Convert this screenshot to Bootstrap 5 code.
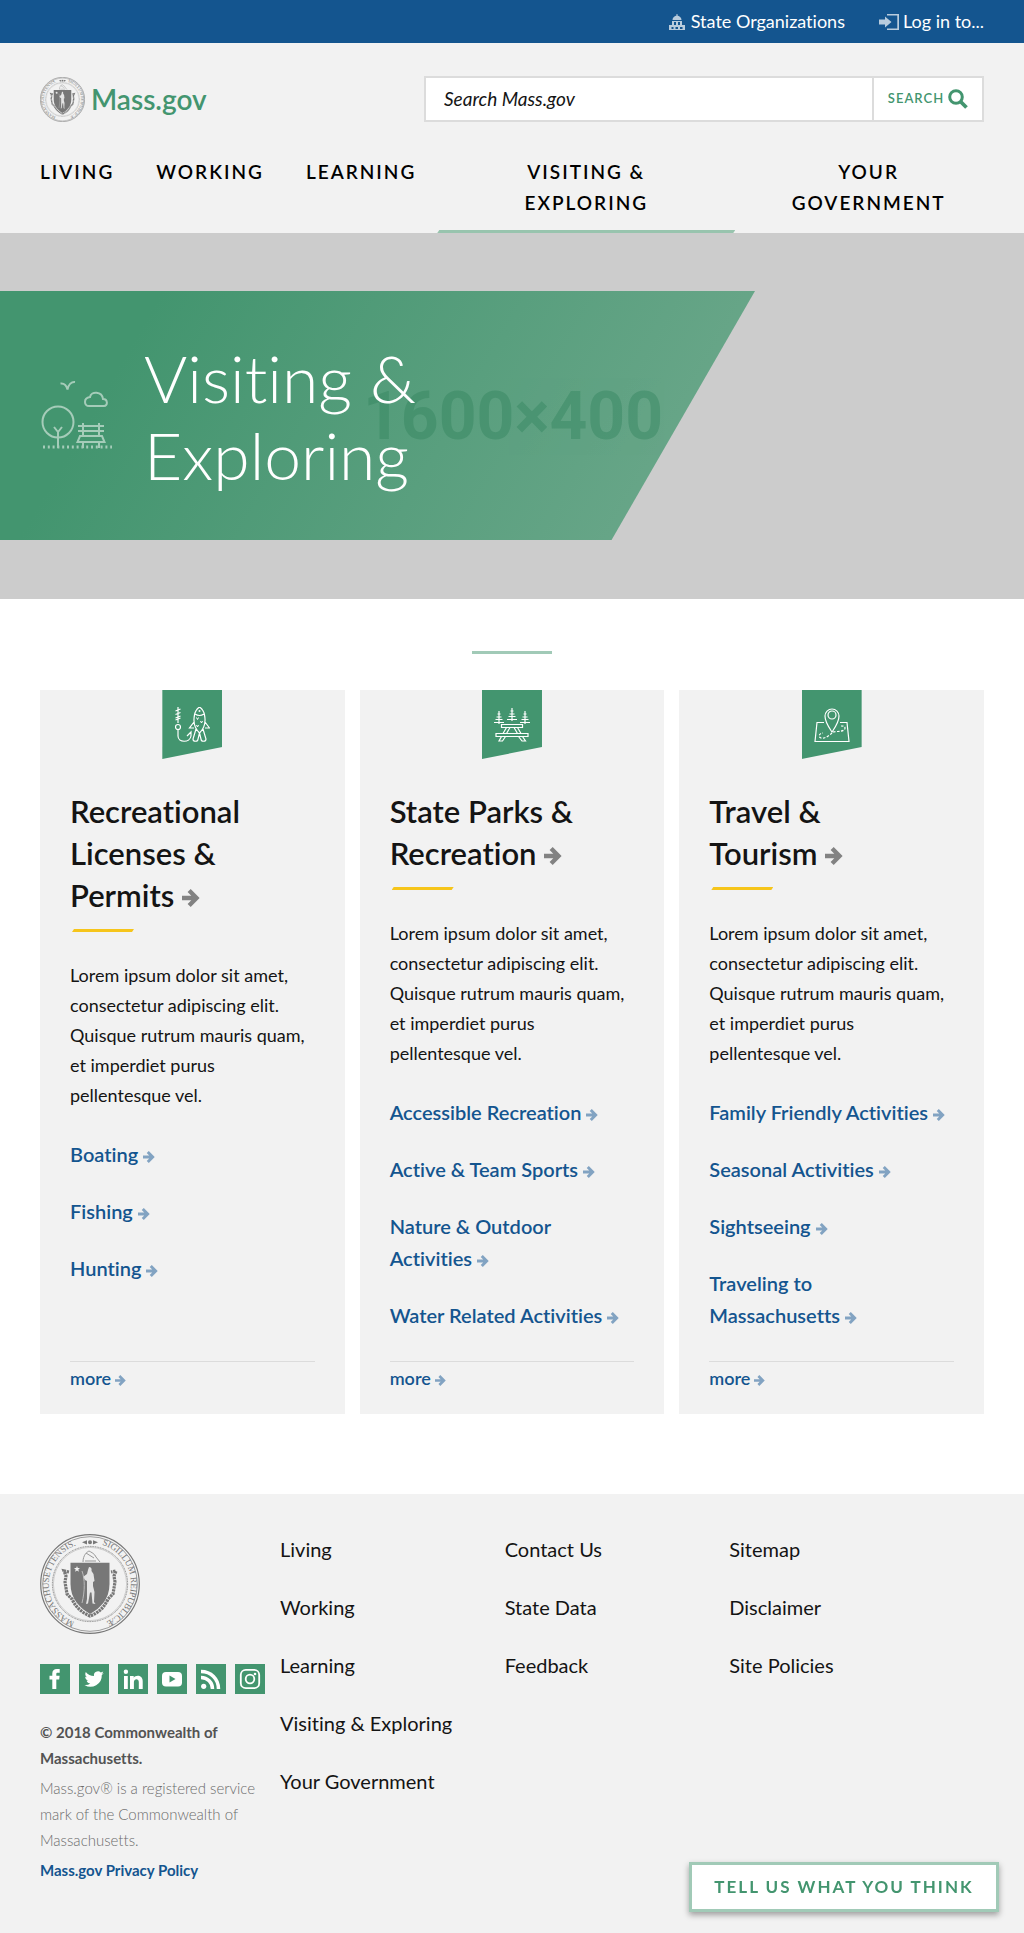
<!DOCTYPE html>
<html lang="en">
<head>
<meta charset="utf-8">
<meta name="viewport" content="width=device-width, initial-scale=1">
<title>Visiting &amp; Exploring | Mass.gov</title>
<link href="https://cdn.jsdelivr.net/npm/bootstrap@5.3.0/dist/css/bootstrap.min.css" rel="stylesheet">
<style>
:root{--green:#43956f;--mint:#a1cab7;--blue:#14558f;--pale:#f2f2f2;--ink:#141414}
body{font-family:Lato,"Open Sans",sans-serif;font-variant-ligatures:none;color:var(--ink);background:#fff}
a{text-decoration:none;color:inherit}
.wrap{padding-left:40px;padding-right:40px}
.utility{background:var(--blue);color:#fff;font-size:18px;line-height:27px;padding-top:8px;padding-bottom:8px;gap:34px}
.utility a{gap:4px}
.utility svg{fill:#fff;opacity:.7}
.masthead{background:var(--pale)}
.brandrow{padding-top:33px;padding-bottom:33px}
.brand{gap:6px}
.sitename{font-size:28px;line-height:36px;font-weight:600;color:var(--green)}
.searchbox{width:560px;height:46px;border:2px solid #dcdcdc;background:#fff}
.searchbox input{font-size:19px;font-style:italic;font-weight:400;padding:0 18px;border:0;min-width:0;color:var(--ink)}
.searchbox input::placeholder{color:var(--ink);opacity:1}
.searchbox button{width:110px;border:0;border-left:2px solid #dcdcdc;background:#fff;color:var(--green);font-size:13px;font-weight:600;letter-spacing:1px;gap:4px;padding:0}
.mainnav{font-size:19px;line-height:31px;font-weight:600;letter-spacing:2px;text-transform:uppercase}
.mainnav a{display:block;color:#000;padding:1px 21px 12px;height:78px;text-align:center}
.mainnav li:first-child a{padding-left:0}
.mainnav .wide{flex:0 1 298px}
.mainnav .last{flex:1 1 228px;padding-left:18px}
.mainnav .current{position:relative}
.mainnav .current::after{content:"";position:absolute;left:0;right:0;bottom:0;height:3px;background:#98c4ae;clip-path:polygon(2px 0,100% 0,calc(100% - 2px) 100%,0 100%)}
.hero{background:#ccc;padding:58px 0 59px}
.hero-band{height:249px;width:755px;max-width:100%;position:relative;clip-path:polygon(0 0,100% 0,81% 100%,0 100%);background:linear-gradient(120deg,#43956f 18%,#6fa98d 100%);padding-left:40px;gap:32px}
.hero-band h1{font-size:66px;line-height:77px;font-weight:300;color:#fff;width:310px;margin:0;position:relative}
.placeholder-size{position:absolute;left:363px;top:76px;font:700 66px/100px Roboto,sans-serif;color:#34855f;opacity:.45}
.rule-mark{width:80px;height:3px;background:var(--mint);margin:52px auto 36px}
.topics{--bs-gutter-x:15px}
.topic{background:var(--pale);padding:0 30px 20px}
.ribbon{width:60px;height:69px;background:var(--green);clip-path:polygon(0 0,100% 0,100% 57px,0 100%);padding-top:17px;margin-bottom:31px;align-self:center}
.topic h2{font-size:31px;line-height:42px;font-weight:600;margin:0 0 13px}
.topic h2 svg{fill:#828282;vertical-align:0}
.topic hr{width:62px;height:3px;margin:0 2px 28px;border:0;opacity:1;background:#f6c51b;clip-path:polygon(2px 0,100% 0,calc(100% - 2px) 100%,0 100%)}
.topic p{font-size:18px;line-height:30px;margin:0 0 28px}
.topic-links{font-size:20px;line-height:32px;font-weight:600;color:var(--blue);margin:0 0 30px}
.topic-links li+li{margin-top:25px}
.topic-links svg,.more svg{fill:#82a3c2}
.more{border-top:1px solid #dcdcdc;font-size:18px;line-height:26px;font-weight:600;color:var(--blue);padding:3px 0}
.sitefoot{background:var(--pale);margin-top:80px;padding-top:40px;padding-bottom:50px;min-height:439px}
.foot-about{width:240px;flex:none}
.social{gap:9px;margin:30px 0 25px}
.social a{width:30px;height:30px;background:var(--green)}
.legal{font-size:15px;line-height:26px}
.legal p{margin:0 0 4px}
.legal .owner{color:#535353;font-weight:700}
.legal .notice{color:#6c6c6c;font-weight:300}
.legal .policy{color:var(--blue);font-weight:700}
.foot-links{font-size:20px;line-height:31px;padding-right:30px}
.foot-links li{margin-bottom:27px}
.feedback{position:fixed;right:25px;bottom:21px;width:310px;height:50px;background:#fff;border:3px solid var(--mint);color:var(--green);font-size:17px;font-weight:700;letter-spacing:2px;padding:0;white-space:nowrap;box-shadow:0 3px 6px rgba(0,0,0,.35)}
@media (max-width:900px){.mainnav{flex-wrap:wrap}.searchbox{width:100%}.brandrow{flex-wrap:wrap;gap:16px}.foot-cols{flex-wrap:wrap}}
</style>
</head>
<body>
<svg width="0" height="0" class="position-absolute" aria-hidden="true">
<defs>
<symbol id="arrow" viewBox="0 0 18 18"><path d="M0 6.8h9.3L5.6 3.1 8.7 0 17.6 9 8.7 18l-3.1-3.1 3.7-3.7H0z"/></symbol>
<path id="ringA" d="M34.800 88.100A41 41 0 0 1 40.500 10.100" fill="none"/>
<path id="ringB" d="M62 10.800A41 41 0 0 1 47 90.900" fill="none"/>
<symbol id="seal" viewBox="0 0 100 100">
<g fill="none" stroke="#777"><circle cx="50" cy="50" r="49.3" stroke-width="1.2"/><circle cx="50" cy="50" r="47.3" stroke-width=".7"/><circle cx="50" cy="50" r="37.6" stroke-width=".9" stroke-dasharray="1 .7"/><circle cx="50" cy="50" r="36.6" stroke-width=".3"/></g>
<g fill="none" stroke="#999" stroke-width="1"><path d="M43 28c0-7 4-10 6-11 2 1 6 3 7 6l4 5M46 19l8 5M45 27h11"/></g>
<path d="M42 8.200l5-2v4.400zM58 8.200l-5-2v4.400zM48 8.200a2 2 0 1 0 4 0a2 2 0 1 0-4 0" fill="#777"/>
<path d="M30.500 28.700h39V50c0 15-9 24-19.500 30C40 74 30.500 65 30.500 50z" fill="#777"/>
<path d="M29 38l-5-1 2 5-1 6 2 12 5 5c4 9 11 14 18 17 8-3 14-8 18-17l5-5 2-12-1-6 2-5-5 1" fill="none" stroke="#777" stroke-width="3.200" stroke-dasharray="2.400 .7"/>
<path d="M37 32l.8 2.100h2.200l-1.700 1.500.6 2.200-1.900-1.300-1.900 1.300.6-2.200-1.700-1.500h2.200z" fill="#f2f2f2"/>
<path d="M49 33c2 0 3 1 2.500 4l2 3 1 7-1.500 1v4l1.500 6-.5 10 1.500 2-3-.5-1-11h-1.500l-2 11-2 .5 1-5V47l-2-1-2-3 4-3 1-4z" fill="#e5e5e5"/>
<path d="M42 37c3 8 3 20 0 32" fill="none" stroke="#bbb" stroke-width="1"/>
<g fill="#777" font-family="Liberation Serif,serif" font-size="9"><text><textPath href="#ringA">MASSACHUSETTENSIS.</textPath></text><text><textPath href="#ringB">SIGILLUM REIPUBLICÆ</textPath></text></g>
</symbol>
</defs>
</svg>

<div class="utility wrap d-flex justify-content-end">
<a href="#" class="d-flex align-items-center"><svg width="20" height="16" viewBox="0 0 20 16"><path d="M9.500 0h1v1.500C13 2 14.500 4 14.500 6h-9C5.500 4 7 2 9.500 1.500zM5 7h10v1H5zM5 8h2v3H5zm4 0h2v3H9zm4 0h2v3h-2zM2 11h16v2H2zM2 13h2.500v3H2zm4.500 0h2v3h-2zm4.500 0h2v3h-2zm4.500 0H18v3h-2.500zM2 15h16v1H2z"/></svg>State Organizations</a>
<a href="#" class="d-flex align-items-center"><svg width="20" height="16" viewBox="0 0 20 16"><path d="M0 5.500h6V2.500L12.500 8 6 13.500v-3H0zM8 0h12v16H8v-1.500h10.300v-13H8z"/></svg>Log in to...</a>
</div>

<header class="masthead">
<div class="brandrow wrap d-flex justify-content-between align-items-center">
<a href="#" class="brand d-flex align-items-center"><svg width="45" height="45"><use href="#seal"/></svg><span class="sitename">Mass.gov</span></a>
<form class="searchbox d-flex" role="search" onsubmit="return false">
<label for="q" class="visually-hidden">Search Mass.gov</label>
<input id="q" type="search" class="flex-fill" placeholder="Search Mass.gov">
<button type="submit" class="d-flex align-items-center justify-content-center">SEARCH<svg width="20" height="20" viewBox="0 0 20 20" fill="none" stroke="#43956f"><circle cx="8" cy="8" r="6.300" stroke-width="3"/><path d="M12.500 12.500l6 6" stroke-width="3.800"/></svg></button>
</form>
</div>
<nav class="wrap" aria-label="Main">
<ul class="mainnav list-unstyled d-flex m-0">
<li><a href="#">Living</a></li>
<li><a href="#">Working</a></li>
<li><a href="#">Learning</a></li>
<li class="wide"><a href="#" class="current">Visiting &amp;<br>Exploring</a></li>
<li class="last"><a href="#">Your<br>Government</a></li>
</ul>
</nav>
</header>

<main>
<section class="hero">
<div class="hero-band d-flex align-items-center">
<span class="placeholder-size">1600×400</span>
<svg width="72" height="72" viewBox="0 0 72 72" fill="none" stroke="#a5ccb9" stroke-width="2" class="flex-shrink-0">
<circle cx="18" cy="42" r="15.500"/><path d="M18 68V52M14 47l4 5 4-5"/><path d="M20.500 3.500c4-.5 6 2 7 6 1-5 4-8 7.500-7.500"/>
<path d="M49 26c-5 0-6-8 1-9 1-6 12-6 13 2 5 0 5 7 1 7z"/>
<path d="M38 46h26M38 51h26M43 43v13M59 43v13M40 56h22l2.500 6h-27zM43 63v5M59 63v5"/>
<path d="M3 67h69" stroke-dasharray="2 2.800" stroke-width="3"/></svg>
<h1>Visiting &amp;<br>Exploring</h1>
</div>
</section>

<div class="rule-mark"></div>

<section class="wrap">
<div class="row topics">
<div class="col-md-4 d-flex">
<article class="topic d-flex flex-column w-100">
<div class="ribbon text-center"><svg width="36" height="36" viewBox="0 0 36 36" fill="none" stroke="#fff" stroke-width="1.200"><path d="M4 0v16M1.500 4l5-2M1.500 7.500l5-2M1.500 11l5-2M1.500 13l5-2"/><circle cx="4" cy="20" r="2.500"/><path d="M4 23v6c0 7 12 7 13 0v-4l-4 4"/><path d="M25.500 0c-3 2-4.500 5-5 8-1.500 7 0 13 5 18 5-5 6.500-11 5-18-.5-3-2-6-5-8zM21 7c3 2 6 2 9 0M20 15l-4.500 6h4.500M31 15l4.500 6h-4.500M22 22l-3 10c0 3 5 3 5 0l1.500-6 1.500 6c0 3 5 3 5 0l-3-10"/><path d="M22.500 10.500l1 2 1-2M26.500 14l1 2 1-2M22.500 18l1 2 1-2" stroke-width="1"/><circle cx="25.500" cy="4" r=".4"/></svg></div>
<h2><a href="#">Recreational Licenses &amp; Permits&nbsp;<svg width="18" height="18"><use href="#arrow"/></svg></a></h2>
<hr>
<p>Lorem ipsum dolor sit amet, consectetur adipiscing elit. Quisque rutrum mauris quam, et imperdiet purus pellentesque vel.</p>
<ul class="topic-links list-unstyled">
<li><a href="#">Boating <svg width="12" height="12"><use href="#arrow"/></svg></a></li>
<li><a href="#">Fishing <svg width="12" height="12"><use href="#arrow"/></svg></a></li>
<li><a href="#">Hunting <svg width="12" height="12"><use href="#arrow"/></svg></a></li>
</ul>
<div class="more mt-auto"><a href="#">more<svg width="11" height="11" class="ms-1"><use href="#arrow"/></svg></a></div>
</article>
</div>
<div class="col-md-4 d-flex">
<article class="topic d-flex flex-column w-100">
<div class="ribbon text-center"><svg width="36" height="36" viewBox="0 0 36 36" fill="none" stroke="#fff" stroke-width="1.200"><g id="pine"><path d="M18 1v13M16.500 4h3M15.500 7h5M14.500 9.500h7M13 12.500h10"/></g><use href="#pine" x="-13" y="3"/><use href="#pine" x="13" y="3"/><path d="M7.500 17.500h21v3h-21zM2 26.500h32v3H2zM12.500 20.500l-3.500 6M16 20.500l-3.500 6M20 20.500l3.500 6M23.500 20.500l3.500 6M7.500 29.500l-2.500 4.500h3.500l3-4.500M28.500 29.500l3 4.500H28l-3.500-4.500"/></svg></div>
<h2><a href="#">State Parks &amp; Recreation&nbsp;<svg width="18" height="18"><use href="#arrow"/></svg></a></h2>
<hr>
<p>Lorem ipsum dolor sit amet, consectetur adipiscing elit. Quisque rutrum mauris quam, et imperdiet purus pellentesque vel.</p>
<ul class="topic-links list-unstyled">
<li><a href="#">Accessible Recreation <svg width="12" height="12"><use href="#arrow"/></svg></a></li>
<li><a href="#">Active &amp; Team Sports <svg width="12" height="12"><use href="#arrow"/></svg></a></li>
<li><a href="#">Nature &amp; Outdoor<br>Activities <svg width="12" height="12"><use href="#arrow"/></svg></a></li>
<li><a href="#">Water Related Activities <svg width="12" height="12"><use href="#arrow"/></svg></a></li>
</ul>
<div class="more mt-auto"><a href="#">more<svg width="11" height="11" class="ms-1"><use href="#arrow"/></svg></a></div>
</article>
</div>
<div class="col-md-4 d-flex">
<article class="topic d-flex flex-column w-100">
<div class="ribbon text-center"><svg width="36" height="36" viewBox="0 0 36 36" fill="none" stroke="#fff" stroke-width="1.200"><path d="M18 25c-4-6-7-10-7-16a7 7 0 0 1 14 0c0 6-3 10-7 16z"/><circle cx="18" cy="8" r="4"/><path d="M10 15.500H3L1 34.500h34l-2-19h-7"/><path d="M18 26c-3 3-8 6-11 5-3-1-2-5 2-5M19 25c5-1 12 0 12-4 0-2-2-2-5-2" stroke-dasharray="2.500 1.500"/></svg></div>
<h2><a href="#">Travel &amp;<br>Tourism&nbsp;<svg width="18" height="18"><use href="#arrow"/></svg></a></h2>
<hr>
<p>Lorem ipsum dolor sit amet, consectetur adipiscing elit. Quisque rutrum mauris quam, et imperdiet purus pellentesque vel.</p>
<ul class="topic-links list-unstyled">
<li><a href="#">Family Friendly Activities <svg width="12" height="12"><use href="#arrow"/></svg></a></li>
<li><a href="#">Seasonal Activities <svg width="12" height="12"><use href="#arrow"/></svg></a></li>
<li><a href="#">Sightseeing <svg width="12" height="12"><use href="#arrow"/></svg></a></li>
<li><a href="#">Traveling to<br>Massachusetts <svg width="12" height="12"><use href="#arrow"/></svg></a></li>
</ul>
<div class="more mt-auto"><a href="#">more<svg width="11" height="11" class="ms-1"><use href="#arrow"/></svg></a></div>
</article>
</div>
</div>
</section>
</main>

<footer class="sitefoot wrap">
<div class="foot-cols d-flex">
<div class="foot-about">
<svg width="100" height="100" class="d-block"><use href="#seal"/></svg>
<div class="social d-flex">
<a href="#" aria-label="Facebook"><svg width="30" height="30" viewBox="0 0 30 30"><path fill="#fff" d="M12.300 25v-9.500H9.500v-3.700h2.800V9.500c0-3 1.700-4.500 4.500-4.500h2.900v3.700h-2c-1 0-1.400.4-1.400 1.300v1.800h3.300l-.4 3.700h-2.900V25z"/></svg></a>
<a href="#" aria-label="Twitter"><svg width="30" height="30" viewBox="0 0 30 30"><path fill="#fff" d="M24.800 9c-.7.400-1.400.6-2.200.7.800-.5 1.400-1.200 1.700-2.100-.8.400-1.600.7-2.500.9a4 4 0 0 0-6.800 3.600c-3.300-.2-6.200-1.700-8.200-4.200-1 1.800-.5 4.100 1.200 5.300-.6 0-1.200-.2-1.800-.5 0 2 1.400 3.600 3.200 4-.6.100-1.200.1-1.800 0 .5 1.600 2 2.700 3.700 2.800A8 8 0 0 1 5.500 21a11.300 11.300 0 0 0 17.300-10c.8-.6 1.500-1.200 2-2z"/></svg></a>
<a href="#" aria-label="LinkedIn"><svg width="30" height="30" viewBox="0 0 30 30"><path fill="#fff" d="M6 12h3.800v13H6zM7.900 5.500a2.200 2.200 0 1 1 0 4.400 2.200 2.200 0 0 1 0-4.400zM12 12h3.700v1.700c2-3 9-3 9 3.500V25h-3.900v-7c0-4-4.900-3.600-4.900 0v7H12z"/></svg></a>
<a href="#" aria-label="YouTube"><svg width="30" height="30" viewBox="0 0 30 30"><rect x="5" y="8" width="20" height="14.500" rx="4" fill="#fff"/><path fill="#43956f" d="M12.500 11.500l6 3.500-6 3.500z"/></svg></a>
<a href="#" aria-label="RSS"><svg width="30" height="30" viewBox="0 0 30 30" fill="none" stroke="#fff" stroke-width="3.500"><circle cx="7.700" cy="22.300" r="2.600" fill="#fff" stroke="none"/><path d="M5 13.500c6.500 0 11.500 5 11.500 11.500M5 7.500C15 7.500 22.500 15 22.500 25"/></svg></a>
<a href="#" aria-label="Instagram"><svg width="30" height="30" viewBox="0 0 30 30" fill="none" stroke="#fff" stroke-width="1.800"><rect x="5.800" y="5.800" width="18.400" height="18.400" rx="5"/><circle cx="15" cy="15" r="4.300"/><circle cx="20" cy="10" r="1.300" fill="#fff" stroke="none"/></svg></a>
</div>
<div class="legal">
<p class="owner">© 2018 Commonwealth of<br>Massachusetts.</p>
<p class="notice">Mass.gov® is a registered service<br>mark of the Commonwealth of<br>Massachusetts.</p>
<p class="policy"><a href="#">Mass.gov Privacy Policy</a></p>
</div>
</div>
<nav class="foot-links row g-0 flex-fill align-content-start" aria-label="Footer">
<ul class="col-4 list-unstyled m-0">
<li><a href="#">Living</a></li><li><a href="#">Working</a></li><li><a href="#">Learning</a></li><li><a href="#">Visiting &amp; Exploring</a></li><li><a href="#">Your Government</a></li>
</ul>
<ul class="col-4 list-unstyled m-0">
<li><a href="#">Contact Us</a></li><li><a href="#">State Data</a></li><li><a href="#">Feedback</a></li>
</ul>
<ul class="col-4 list-unstyled m-0">
<li><a href="#">Sitemap</a></li><li><a href="#">Disclaimer</a></li><li><a href="#">Site Policies</a></li>
</ul>
</nav>
</div>
</footer>
<button type="button" class="feedback">TELL US WHAT YOU THINK</button>
<script src="https://cdn.jsdelivr.net/npm/bootstrap@5.3.0/dist/js/bootstrap.bundle.min.js"></script>
</body>
</html>
